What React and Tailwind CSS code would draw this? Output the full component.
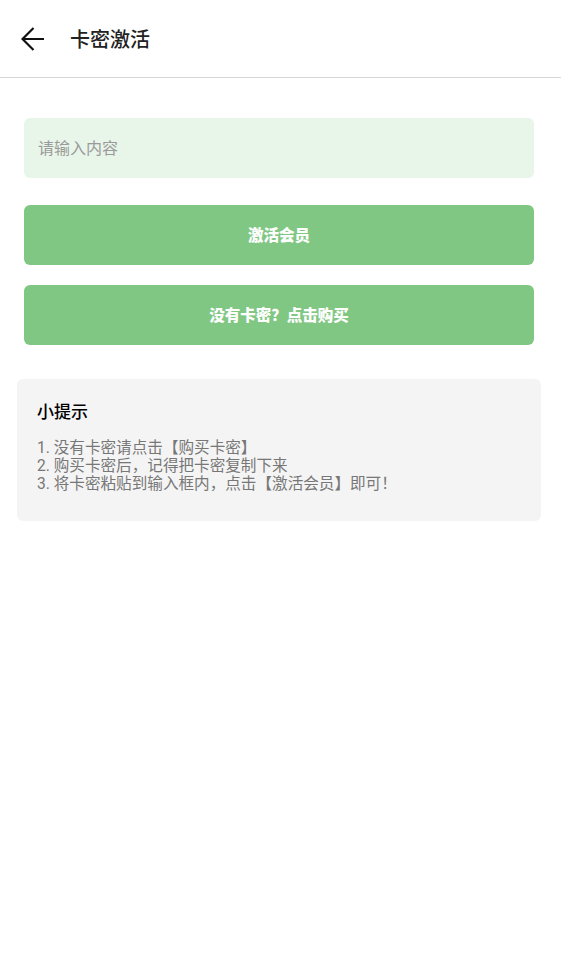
export default function App() {
  const tips = [
    "1. 没有卡密请点击【购买卡密】",
    "2. 购买卡密后，记得把卡密复制下来",
    "3. 将卡密粘贴到输入框内，点击【激活会员】即可！",
  ];

  return (
    <div
      className="min-h-screen bg-white"
      style={{ fontFamily: 'Roboto, "Noto Sans CJK SC", sans-serif' }}
    >
      <div className="h-[78px] flex items-center border-b border-[#d6d6d6]">
        <button className="ml-[21px] w-[24px] h-[24px] flex items-center justify-center">
          <svg width="24" height="24" viewBox="0 0 24 24" fill="none">
            <path
              d="M23 12H1.5M12.5 1L1.5 12l11 11"
              stroke="#111"
              strokeWidth="2.2"
            />
          </svg>
        </button>
        <h1 className="ml-[25px] pt-[2px] text-[20px] font-medium text-[#222]">卡密激活</h1>
      </div>

      <div className="pl-[24px] pr-[27px] pt-[40px]">
        <input
          placeholder="请输入内容"
          className="w-full h-[60px] rounded-[6px] bg-[#e8f5e9] px-[14px] text-[16px] text-[#333] placeholder-[#9a9a9a] outline-none"
        />
        <button className="mt-[27px] w-full h-[60px] pt-[3px] rounded-[6px] bg-[#81c784] text-white text-[15.5px] font-black">
          激活会员
        </button>
        <button className="mt-[20px] w-full h-[60px] pt-[3px] rounded-[6px] bg-[#81c784] text-white text-[15.5px] font-black">
          没有卡密？点击购买
        </button>
      </div>

      <div className="ml-[17px] mr-[20px] mt-[34px] rounded-[6px] bg-[#f4f4f4] px-[20px] pt-[21px] pb-[28px]">
        <h2 className="text-[17px] font-medium text-black leading-[24px]">小提示</h2>
        <div className="mt-[15px] text-[15.6px] leading-[18px] text-[#777]">
          {tips.map((t, i) => (
            <p key={i}>{t}</p>
          ))}
        </div>
      </div>
    </div>
  );
}
